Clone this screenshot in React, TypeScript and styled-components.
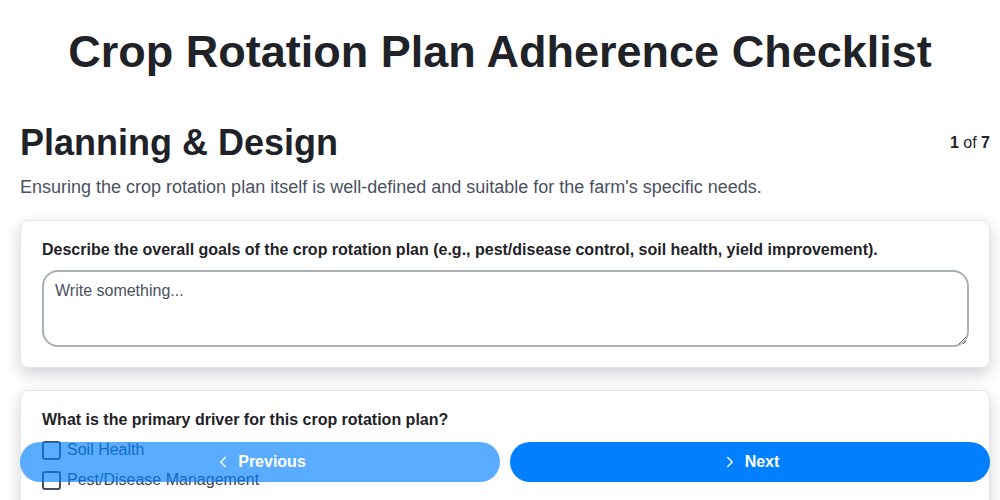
import { useState } from "react";
import styled, { createGlobalStyle } from "styled-components";
import { ChevronLeft, ChevronRight } from "lucide-react";

const GlobalStyle = createGlobalStyle`
  * {
    box-sizing: border-box;
  }
  body {
    margin: 0;
    background: #ffffff;
    color: #1f2328;
    font-family: "Liberation Sans", Arial, sans-serif;
  }
`;

const drivers = [
  "Soil Health",
  "Pest/Disease Management",
  "Weed Control",
  "Yield Improvement",
];

const App = () => {
  const [goals, setGoals] = useState("");
  const [checked, setChecked] = useState<string[]>([]);

  const toggle = (name: string) => {
    setChecked((prev) =>
      prev.includes(name) ? prev.filter((n) => n !== name) : [...prev, name],
    );
  };

  return (
    <>
      <GlobalStyle />
      <Page>
        <Title>Crop Rotation Plan Adherence Checklist</Title>
        <Section>
          <SectionHead>
            <h2>Planning &amp; Design</h2>
            <Counter>
              <b>1</b> of <b>7</b>
            </Counter>
          </SectionHead>
          <Lead>
            Ensuring the crop rotation plan itself is well-defined and suitable
            for the farm's specific needs.
          </Lead>

          <Card>
            <Label>
              Describe the overall goals of the crop rotation plan (e.g.,
              pest/disease control, soil health, yield improvement).
            </Label>
            <TextArea
              placeholder="Write something..."
              value={goals}
              onChange={(e) => setGoals(e.target.value)}
            />
          </Card>

          <Card>
            <Label>What is the primary driver for this crop rotation plan?</Label>
            <Options>
              {drivers.map((d) => (
                <Option key={d}>
                  <input
                    type="checkbox"
                    checked={checked.includes(d)}
                    onChange={() => toggle(d)}
                  />
                  {d}
                </Option>
              ))}
            </Options>
          </Card>
        </Section>
      </Page>

      <Nav>
        <NavButton type="button" disabled>
          <ChevronLeft size={18} strokeWidth={2} />
          Previous
        </NavButton>
        <NavButton type="button">
          <ChevronRight size={18} strokeWidth={2} />
          Next
        </NavButton>
      </Nav>
    </>
  );
};
export default App;

const Page = styled.main`
  padding: 0 10px 120px 20px;
`;

const Title = styled.h1`
  margin: 0 0 0 -10px;
  padding: 26px 0 0;
  text-align: center;
  font-size: 45px;
  line-height: 52px;
  font-weight: 700;
  color: #1f2328;
`;

const Section = styled.section`
  margin-top: 44px;
`;

const SectionHead = styled.div`
  display: flex;
  justify-content: space-between;
  align-items: center;

  h2 {
    margin: 0;
    font-size: 36px;
    line-height: 42px;
    font-weight: 700;
    color: #1f2328;
  }
`;

const Counter = styled.div`
  font-size: 16px;
  color: #1f2328;

  b {
    font-weight: 700;
  }
`;

const Lead = styled.p`
  margin: 11px 0 21px;
  font-size: 18px;
  line-height: 24px;
  color: #4a5161;
`;

const Card = styled.div`
  margin-bottom: 22px;
  padding: 19px 20px 20px 21px;
  background: #ffffff;
  border: 1px solid #e4e6eb;
  border-radius: 8px;
  box-shadow: 0 6px 16px rgba(20, 24, 40, 0.2);
`;

const Label = styled.div`
  font-size: 16px;
  line-height: 20px;
  font-weight: 700;
  color: #1f2328;
  margin-bottom: 10px;
`;

const TextArea = styled.textarea`
  display: block;
  width: 100%;
  height: 77px;
  padding: 10px 11px;
  border: 2px solid #a9b0b8;
  border-radius: 16px;
  font-family: "Liberation Sans", Arial, sans-serif;
  font-size: 16px;
  color: #1f2328;
  resize: vertical;
  outline: none;

  &::placeholder {
    color: #4a5161;
  }
`;

const Options = styled.div`
  display: flex;
  flex-direction: column;
  gap: 10px;
`;

const Option = styled.label`
  display: flex;
  align-items: center;
  gap: 6px;
  font-size: 16px;
  line-height: 20px;
  color: #3d4352;

  input {
    appearance: none;
    margin: 0;
    width: 19px;
    height: 19px;
    border: 2px solid #474d5c;
    border-radius: 3px;
    background: #ffffff;
  }

  input:checked {
    background: #0080ff;
    border-color: #0080ff;
  }
`;

const Nav = styled.div`
  position: fixed;
  left: 20px;
  right: 10px;
  bottom: 18px;
  display: flex;
  gap: 10px;
`;

const NavButton = styled.button`
  flex: 1;
  display: flex;
  align-items: center;
  justify-content: center;
  gap: 6px;
  height: 40px;
  border: none;
  border-radius: 20px;
  background: #0080ff;
  color: #ffffff;
  font-family: "Liberation Sans", Arial, sans-serif;
  font-size: 16px;
  font-weight: 700;
  cursor: pointer;

  &:disabled {
    opacity: 0.65;
    cursor: not-allowed;
  }
`;
